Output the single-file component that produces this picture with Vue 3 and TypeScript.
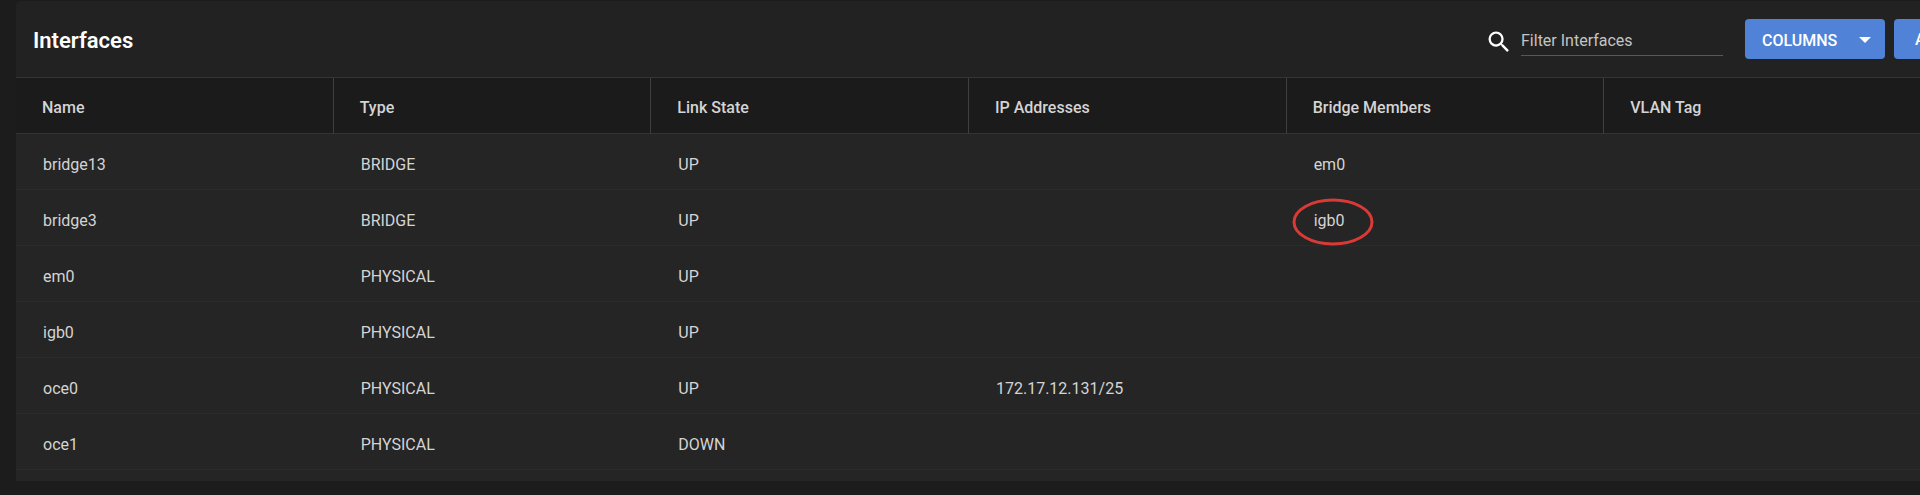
<script setup lang="ts">
import { ref, computed } from 'vue'

interface NetworkInterface {
  name: string
  type: string
  state: string
  addresses: string
  members: string
  vlan: string
  highlighted?: boolean
}

const headings: string[] = ['Name', 'Type', 'Link State', 'IP Addresses', 'Bridge Members', 'VLAN Tag']

const rows: NetworkInterface[] = [
  { name: 'bridge13', type: 'BRIDGE', state: 'UP', addresses: '', members: 'em0', vlan: '' },
  { name: 'bridge3', type: 'BRIDGE', state: 'UP', addresses: '', members: 'igb0', vlan: '', highlighted: true },
  { name: 'em0', type: 'PHYSICAL', state: 'UP', addresses: '', members: '', vlan: '' },
  { name: 'igb0', type: 'PHYSICAL', state: 'UP', addresses: '', members: '', vlan: '' },
  { name: 'oce0', type: 'PHYSICAL', state: 'UP', addresses: '172.17.12.131/25', members: '', vlan: '' },
  { name: 'oce1', type: 'PHYSICAL', state: 'DOWN', addresses: '', members: '', vlan: '' },
]

const filter = ref<string>('')

const visibleRows = computed<NetworkInterface[]>(() =>
  rows.filter((row) => row.name.toLowerCase().includes(filter.value.toLowerCase())),
)
</script>

<template>
  <main class="page">
    <section class="card">
      <header class="toolbar">
        <h1 class="title">Interfaces</h1>
        <div class="actions">
          <label class="search-label" for="interface-filter" aria-label="Filter Interfaces">
            <svg class="search-icon" viewBox="0 0 24 24" aria-hidden="true">
              <path
                d="M15.5 14h-.79l-.28-.27A6.471 6.471 0 0 0 16 9.5 6.5 6.5 0 1 0 9.5 16c1.61 0 3.09-.59 4.23-1.57l.27.28v.79l5 4.99L20.49 19l-4.99-5zm-6 0C7.01 14 5 11.99 5 9.5S7.01 5 9.5 5 14 7.01 14 9.5 11.99 14 9.5 14z"
              />
            </svg>
          </label>
          <input id="interface-filter" v-model="filter" class="search-input" type="text" placeholder="Filter Interfaces" />
          <button class="button columns" type="button">
            <span>COLUMNS</span>
            <svg class="caret" viewBox="0 0 12 6" aria-hidden="true"><path d="M0 0h12L6 6z" /></svg>
          </button>
          <button class="button add" type="button">ADD</button>
        </div>
      </header>

      <table class="table">
        <thead>
          <tr>
            <th v-for="heading in headings" :key="heading" scope="col">{{ heading }}</th>
          </tr>
        </thead>
        <tbody>
          <tr v-for="row in visibleRows" :key="row.name">
            <td>{{ row.name }}</td>
            <td>{{ row.type }}</td>
            <td>{{ row.state }}</td>
            <td>{{ row.addresses }}</td>
            <td>
              <span class="member">
                {{ row.members }}
                <svg v-if="row.highlighted" class="ring" viewBox="0 0 82 48" aria-hidden="true">
                  <ellipse cx="41" cy="24" rx="39" ry="22" />
                </svg>
              </span>
            </td>
            <td>{{ row.vlan }}</td>
          </tr>
        </tbody>
      </table>
    </section>
  </main>
</template>

<style>
body {
  background: #1c1c1c;
}
</style>

<style scoped>
.page {
  box-sizing: border-box;
  padding: 1px 0 14px 16px;
  overflow: hidden;
  background: #1c1c1c;
  color: #d4d4d4;
  font-family: Roboto, "Liberation Sans", sans-serif;
  font-size: 16px;
  line-height: 24px;
}

/* The card continues past the right edge of the window. */
.card {
  margin-right: -2px;
  padding-bottom: 11px;
  border-top-left-radius: 6px;
  background: #252525;
}

.toolbar {
  display: flex;
  align-items: center;
  justify-content: space-between;
  box-sizing: border-box;
  height: 77px;
  padding-left: 17px;
  border-top-left-radius: 6px;
  border-bottom: 1px solid #343434;
  background: #222222;
}

.title {
  margin: 0;
  padding-top: 4px;
  color: #ffffff;
  font-size: 22px;
  font-weight: 600;
  line-height: 32px;
}

.actions {
  display: flex;
  align-items: center;
  margin-right: -48px;
}

.search-label {
  display: flex;
  margin-right: 8px;
  padding-top: 6px;
}

.search-icon {
  width: 28px;
  height: 28px;
  fill: #ffffff;
}

.search-input {
  box-sizing: border-box;
  width: 202px;
  height: 34px;
  margin-right: 22px;
  padding: 4px 0 0;
  border: 0;
  border-bottom: 1px solid #585858;
  outline: 0;
  background: transparent;
  color: #d4d4d4;
  font: inherit;
}

.search-input::placeholder {
  color: #c4c4c4;
  opacity: 1;
}

.button {
  display: flex;
  align-items: center;
  box-sizing: border-box;
  height: 40px;
  border: 0;
  border-radius: 4px;
  background: #5083d8;
  color: #ffffff;
  font: inherit;
  font-weight: 500;
}

.columns {
  justify-content: space-between;
  width: 140px;
  margin-right: 9px;
  padding: 4px 14px 0 17px;
}

.add {
  width: 76px;
  padding: 2px 21px 0;
}

.caret {
  width: 12px;
  height: 6px;
  margin-bottom: 2px;
  fill: #ffffff;
}

.table {
  width: 100%;
  table-layout: fixed;
  border-collapse: separate;
  border-spacing: 0;
}

.table th {
  box-sizing: border-box;
  height: 56px;
  padding: 4px 0 0 26px;
  border-right: 1px solid #3f3f3f;
  border-bottom: 1px solid #343434;
  background: #1b1b1b;
  font-weight: 500;
  text-align: left;
}

.table th:last-child {
  border-right: 0;
}

.table td {
  box-sizing: border-box;
  height: 56px;
  padding: 6px 0 0 27px;
  border-bottom: 1px solid #2b2b2b;
}

.member {
  position: relative;
}

.ring {
  position: absolute;
  top: -13px;
  left: -22px;
  width: 82px;
  height: 48px;
  fill: none;
  stroke: #d93a35;
  stroke-width: 3;
}
</style>
